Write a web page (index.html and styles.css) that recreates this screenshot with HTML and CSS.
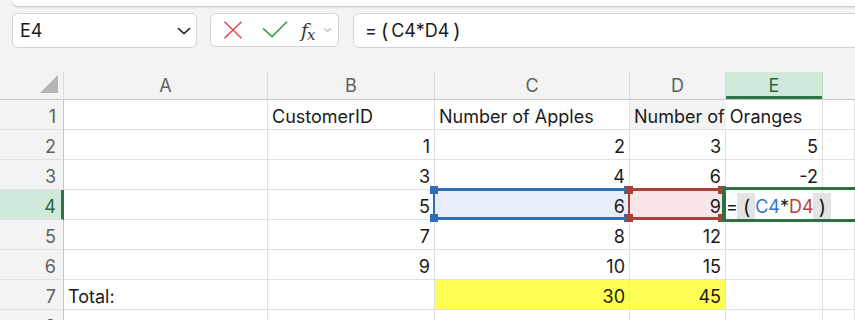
FILE: index.html
```
<!DOCTYPE html>
<html lang="en">
<head>
    <meta charset="UTF-8">
    <meta name="viewport" content="width=device-width, initial-scale=1.0">
    <title>Sheet1</title>
    <link rel="stylesheet" href="styles.css">
</head>
<body>
    <div class="topbar"></div>

    <!-- name box, commit buttons, formula input -->
    <div class="formula-row">
        <div class="namebox">
            <span>E4</span>
            <svg width="14" height="8" viewBox="0 0 14 8"><path d="M1 1.2 L7 6.6 L13 1.2" fill="none" stroke="#2b2b2b" stroke-width="1.6"/></svg>
        </div>
        <div class="fxbox">
            <svg class="icon-x" width="20" height="18" viewBox="0 0 20 18"><path d="M1.5 0.8 L18.5 17.2 M18.5 0.8 L1.5 17.2" stroke="#e0474c" stroke-width="1.5" fill="none"/></svg>
            <svg class="icon-ok" width="26" height="18" viewBox="0 0 26 18"><path d="M1 7.3 L10 15.6 L25 0.8" stroke="#3c9a4a" stroke-width="1.6" fill="none"/></svg>
            <span class="fx">f<span>x</span></span>
            <svg class="icon-more" width="9" height="6" viewBox="0 0 9 6"><path d="M1 1.2 L4.5 4.4 L8 1.2" stroke="#bdbdbd" stroke-width="1.2" fill="none"/></svg>
        </div>
        <div class="formula">=<span class="paren">(</span>C4*D4<span class="paren">)</span></div>
    </div>

    <div class="sheet">
        <div class="corner"><svg width="18" height="18" viewBox="0 0 18 18"><polygon points="18,0 18,18 0,18" fill="#b5b5b5"/></svg></div>
        <div class="col-head">A</div>
        <div class="col-head">B</div>
        <div class="col-head">C</div>
        <div class="col-head">D</div>
        <div class="col-head active">E</div>
        <div class="col-head last"></div>

        <div class="row-head">1</div>
        <div class="cell"></div>
        <div class="cell">CustomerID</div>
        <div class="cell">Number of Apples</div>
        <div class="cell overflow">Number of Oranges</div>
        <div class="cell"></div>
        <div class="cell"></div>

        <div class="row-head">2</div>
        <div class="cell"></div>
        <div class="cell num">1</div>
        <div class="cell num">2</div>
        <div class="cell num">3</div>
        <div class="cell num">5</div>
        <div class="cell"></div>

        <div class="row-head">3</div>
        <div class="cell"></div>
        <div class="cell num">3</div>
        <div class="cell num">4</div>
        <div class="cell num">6</div>
        <div class="cell num">-2</div>
        <div class="cell"></div>

        <div class="row-head active">4</div>
        <div class="cell"></div>
        <div class="cell num">5</div>
        <div class="cell num ref-blue">
            <span class="handle tl"></span><span class="handle bl"></span>
            <span class="handle tr"></span><span class="handle br"></span>
            6
        </div>
        <div class="cell num ref-red">
            <span class="handle tl"></span><span class="handle bl"></span>
            <span class="handle tr"></span><span class="handle br"></span>
            9
        </div>
        <div class="cell editing">=<span class="paren hl">(</span><span class="c-blue">C4</span>*<span class="c-red">D4</span><span class="paren hl">)</span></div>
        <div class="cell"></div>

        <div class="row-head">5</div>
        <div class="cell"></div>
        <div class="cell num">7</div>
        <div class="cell num">8</div>
        <div class="cell num">12</div>
        <div class="cell"></div>
        <div class="cell"></div>

        <div class="row-head">6</div>
        <div class="cell"></div>
        <div class="cell num">9</div>
        <div class="cell num">10</div>
        <div class="cell num">15</div>
        <div class="cell"></div>
        <div class="cell"></div>

        <div class="row-head">7</div>
        <div class="cell">Total:</div>
        <div class="cell"></div>
        <div class="cell num total">30</div>
        <div class="cell num total">45</div>
        <div class="cell"></div>
        <div class="cell"></div>

        <div class="row-head">8</div>
        <div class="cell"></div>
        <div class="cell"></div>
        <div class="cell"></div>
        <div class="cell"></div>
        <div class="cell"></div>
        <div class="cell"></div>
    </div>
</body>
</html>
```

FILE: styles.css
```
body {
    margin: 0;
    background-color: #f3f3f3;
    font-family: Inter, "Liberation Sans", sans-serif;
    color: #1a1a1a;
    overflow: hidden;
    height: 320px;
}
.topbar {
    height: 6px;
    margin-left: 12px;
    background: #fff;
    border-bottom-left-radius: 8px;
    box-shadow: 0 1px 2px rgba(0, 0, 0, 0.22);
}

/* formula bar */
.formula-row {
    display: flex;
    align-items: flex-start;
    padding: 7px 0 0 12px;
    height: 35px;
}
.namebox {
    box-sizing: border-box;
    width: 185px;
    height: 35px;
    display: flex;
    align-items: center;
    justify-content: space-between;
    padding: 0 5px 0 7px;
    background: #fff;
    border: 1px solid #d4d4d4;
    border-radius: 6px;
    font-size: 18px;
}
.fxbox {
    box-sizing: border-box;
    width: 129px;
    height: 34px;
    margin-left: 13px;
    display: flex;
    align-items: center;
    padding-left: 12px;
    background: #fff;
    border: 1px solid #d4d4d4;
    border-radius: 6px;
}
.icon-ok {
    margin-left: 19px;
}
.fx {
    margin-left: 13px;
    font-family: "DejaVu Serif", serif;
    font-style: italic;
    font-size: 19px;
    color: #333;
    letter-spacing: -1px;
}
.fx span {
    font-size: 15px;
    position: relative;
    top: 3px;
}
.icon-more {
    margin-left: 8px;
}
.formula {
    box-sizing: border-box;
    flex: 1;
    height: 35px;
    margin-left: 14px;
    margin-right: -10px;
    padding-left: 11px;
    display: flex;
    align-items: center;
    background: #fff;
    border: 1px solid #d4d4d4;
    border-radius: 6px;
    font-size: 18px;
}
.paren {
    padding: 0 3px 0 4px;
    font-size: 20px;
}

/* grid */
.sheet {
    display: grid;
    grid-template-columns: 64px 204px 167px 195px 96px 97px 1fr;
    grid-template-rows: 28px repeat(8, 30px);
    margin-top: 24px;
    font-size: 18px;
}
.corner {
    display: flex;
    justify-content: flex-end;
    align-items: flex-end;
    padding: 0 5px 6px 0;
    border-right: 1px solid #dcdcdc;
    border-bottom: 1px solid #c6c6c6;
}
.col-head {
    display: flex;
    align-items: center;
    justify-content: center;
    color: #616161;
    border-right: 1px solid #dcdcdc;
    border-bottom: 1px solid #c6c6c6;
}
.col-head.last {
    border-right: none;
}
.col-head.active {
    background: #d1e9da;
    color: #25683a;
    border-right-color: #b8dcc4;
    box-shadow: inset 0 -3px 0 #2f7445;
}
.row-head {
    display: flex;
    align-items: center;
    justify-content: flex-end;
    padding: 3px 7px 0 0;
    color: #616161;
    border-right: 1px solid #c6c6c6;
    border-bottom: 1px solid #e1e1e1;
}
.row-head.active {
    background: #d1e9da;
    color: #25683a;
    border-right: 3px solid #2f7445;
    padding-right: 5px;
}
.cell {
    position: relative;
    display: flex;
    align-items: center;
    padding: 3px 4px 0 4px;
    background: #fff;
    border-right: 1px solid #e1e1e1;
    border-bottom: 1px solid #e1e1e1;
    white-space: nowrap;
}
.cell.num {
    justify-content: flex-end;
}
.cell.overflow {
    border-right-color: transparent;
    z-index: 1;
    background: transparent;
}
.cell.total {
    background: #ffff55;
}

/* formula references */
.ref-blue {
    background: #e8eef8;
    z-index: 1;
}
.ref-blue::before {
    content: '';
    position: absolute;
    left: -2px;
    top: -2px;
    right: -1px;
    bottom: -1px;
    border: 3px solid #2e6db8;
    border-left-width: 2px;
    border-right-width: 2px;
}
.ref-red {
    background: #f8e7e6;
    z-index: 2;
}
.ref-red::before {
    content: '';
    position: absolute;
    left: -2px;
    top: -2px;
    right: 1px;
    bottom: -1px;
    border: 3px solid #a9403a;
    border-left-width: 2px;
    border-right-width: 2px;
}
.handle {
    position: absolute;
    width: 8px;
    height: 8px;
    background: #2e6db8;
}
.ref-red .handle {
    background: #a9403a;
}
.handle.tl { left: -5px; top: -4px; }
.handle.bl { left: -5px; bottom: -3px; }
.handle.tr { right: -3px; top: -4px; }
.handle.br { right: -3px; bottom: -3px; }
.ref-red .handle.tr,
.ref-red .handle.br { right: -1px; }

.cell.editing {
    z-index: 3;
    padding-left: 0;
}
.cell.editing::before {
    content: '';
    position: absolute;
    left: -4px;
    top: -3px;
    width: 160px;
    bottom: -3px;
    border: 3px solid #2f7040;
    border-left-width: 4px;
}
.paren.hl {
    background: #e3e3e3;
    padding: 2px 5px 1px 6px;
    margin-left: -1px;
}
.c-blue { color: #3574c4; }
.c-red { color: #b8423a; }
```
